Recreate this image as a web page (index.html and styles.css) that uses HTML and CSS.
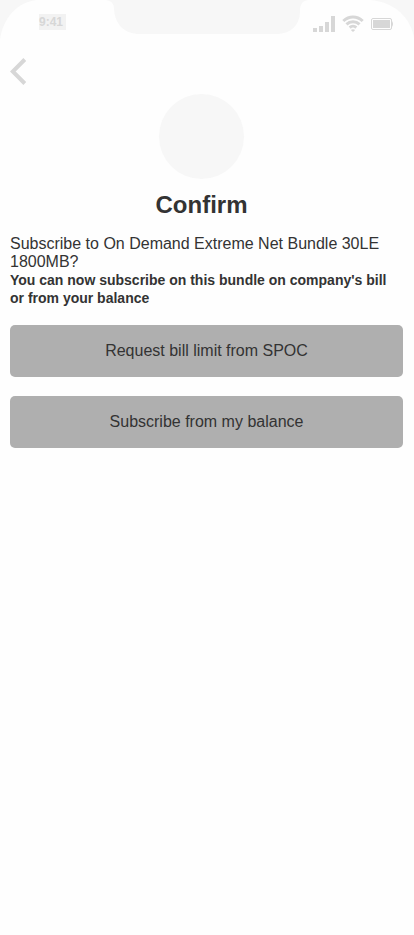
FILE: index.html
```html
<!DOCTYPE html>
<html lang="en">
<head>
<meta charset="utf-8">
<meta name="viewport" content="width=device-width, initial-scale=1">
<title>Confirm</title>
<link rel="stylesheet" href="styles.css">
</head>
<body>
<header class="status-bar">
  <svg class="notch" width="202" height="34" viewBox="0 0 202 34" aria-hidden="true"><path d="M0 0C6 1 8 4 8 9C9 24 18 34 34 34H170C185 34 194 25 194 11C194 5 196 1 202 0Z"/></svg>
  <svg class="corner corner-left" width="40" height="40" viewBox="0 0 40 40" aria-hidden="true"><path d="M0 0H37C17 2 3 18 0 40Z"/></svg>
  <svg class="corner corner-right" width="44" height="38" viewBox="0 0 44 38" aria-hidden="true"><path d="M0 0H44V38C41 18 25 2 0 0Z"/></svg>
  <span class="time">9:41</span>
  <div class="indicators" aria-hidden="true">
    <svg width="22" height="18" viewBox="0 0 22 18"><path d="M0 13h4v4H0zM6 11h4v6H6zM12 7h4v10h-4zM18 1h4v16h-4z"/></svg>
    <svg width="22" height="18" viewBox="0 0 22 18"><path class="wave" d="M1.300 6C7 .8 15 .8 20.700 6M4.500 9.400C8 6 14 6 17.500 9.400M7.700 12.600C9.500 10.900 12.500 10.900 14.300 12.600"/><path d="M8.800 15Q11 13.400 13.200 15L11 17Z"/></svg>
    <svg width="22" height="18" viewBox="0 0 22 18"><rect class="shell" x=".5" y="3.500" width="20" height="11" rx="1.500"/><path d="M2 5h17v8H2zM21 6q2 3 0 6z"/></svg>
  </div>
</header>
<main class="content">
  <a class="back" href="#" aria-label="Back"><svg width="17" height="28" viewBox="0 0 17 28" aria-hidden="true"><path d="M14.800 1.500L2.800 13.500L14.800 25.500"/></svg></a>
  <div class="intro">
    <div class="avatar"></div>
    <h1>Confirm</h1>
  </div>
  <p class="question">Subscribe to On Demand Extreme Net Bundle 30LE 1800MB?</p>
  <p class="note">You can now subscribe on this bundle on company's bill or from your balance</p>
  <div class="actions">
    <button type="button">Request bill limit from SPOC</button>
    <button type="button">Subscribe from my balance</button>
  </div>
</main>
</body>
</html>
```
FILE: styles.css
```css
* { box-sizing: border-box; }
body {
  margin: 0;
  background: #fefefe;
  color: #333;
  font-family: "Liberation Sans", Arial, sans-serif;
}
svg { display: block; }
.status-bar {
  position: relative;
  display: flex;
  justify-content: space-between;
  align-items: flex-start;
  padding: 14px 21px 0 39px;
  height: 58px;
}
.notch, .corner { position: absolute; top: 0; fill: #f7f7f7; }
.notch { left: 50%; margin-left: -101px; }
.corner-left { left: 0; }
.corner-right { right: 0; }
.time {
  width: 27px;
  background: #f2f2f2;
  color: #d7d7d7;
  font-size: 12px;
  font-weight: bold;
  line-height: 16px;
}
.indicators { display: flex; gap: 7px; padding-top: 1px; fill: #d7d7d7; }
.wave { fill: none; stroke: #d7d7d7; stroke-width: 3; }
.shell { fill: none; stroke: #d7d7d7; }
.content { padding: 0 11px 24px 10px; }
.back { display: block; width: 17px; }
.back path { fill: none; stroke: #d7d7d7; stroke-width: 4; }
.intro { padding: 8px 10px 16px 0; }
.avatar {
  width: 85px;
  height: 85px;
  margin: 0 auto 12px;
  border-radius: 50%;
  background: #f7f7f7;
}
h1 {
  margin: 0;
  font-size: 24px;
  line-height: 28px;
  text-align: center;
}
p { margin: 0; line-height: 18px; }
.question { font-size: 16px; }
.note { font-size: 14px; font-weight: bold; }
.actions { display: grid; gap: 19px; margin-top: 18px; }
button {
  min-height: 52px;
  padding: 0 12px;
  border: 0;
  border-radius: 5px;
  background: #afafaf;
  color: #333;
  font: 16px/18px "Liberation Sans", Arial, sans-serif;
}
```
